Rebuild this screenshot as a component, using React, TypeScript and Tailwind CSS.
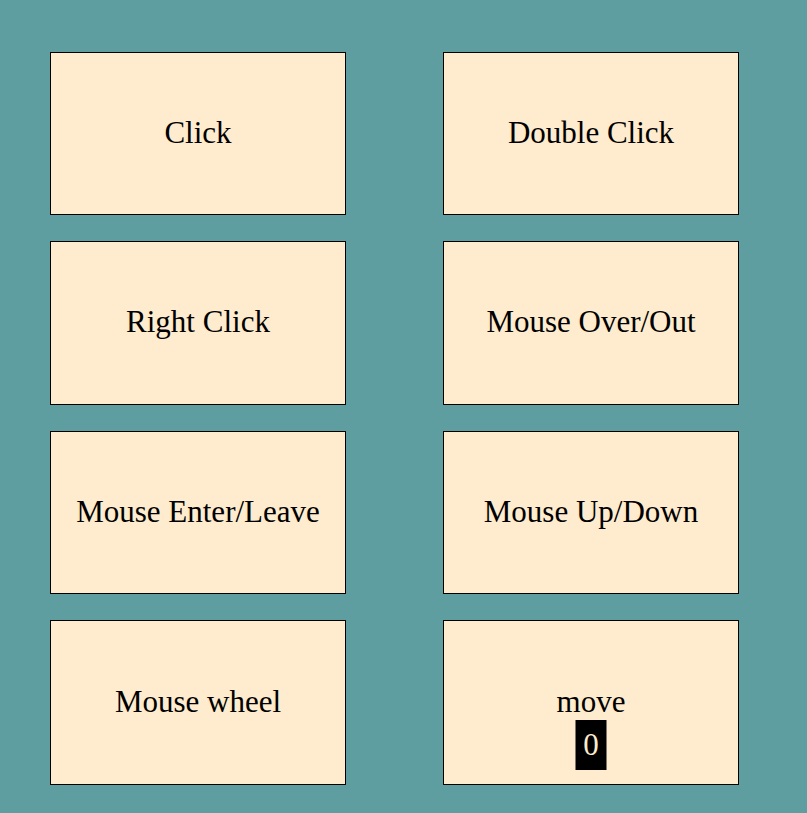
import React from "react";

const labels = [
  "Click",
  "Double Click",
  "Right Click",
  "Mouse Over/Out",
  "Mouse Enter/Leave",
  "Mouse Up/Down",
  "Mouse wheel",
];

export default function App() {
  return (
    <div
      className="w-[807px] h-[813px] bg-[#5f9ea0] pt-[52px] pl-[50px]"
      style={{ fontFamily: '"Liberation Serif", "Times New Roman", serif' }}
    >
      <div className="grid grid-cols-[296px_296px] grid-rows-[163px_164px_163px_165px] gap-x-[97px] gap-y-[26px]">
        {labels.map((l) => (
          <div
            key={l}
            className="border border-black bg-[#ffebcd] flex items-center justify-center pb-[1px] text-[31px] text-black"
          >
            {l}
          </div>
        ))}
        <div className="relative border border-black bg-[#ffebcd] flex items-center justify-center pb-[1px] text-[31px] text-black">
          move
          <span className="absolute top-[99px] left-1/2 -translate-x-1/2 h-[50px] w-[31px] bg-black text-[#ffebcd] flex items-center justify-center">
            0
          </span>
        </div>
      </div>
    </div>
  );
}
